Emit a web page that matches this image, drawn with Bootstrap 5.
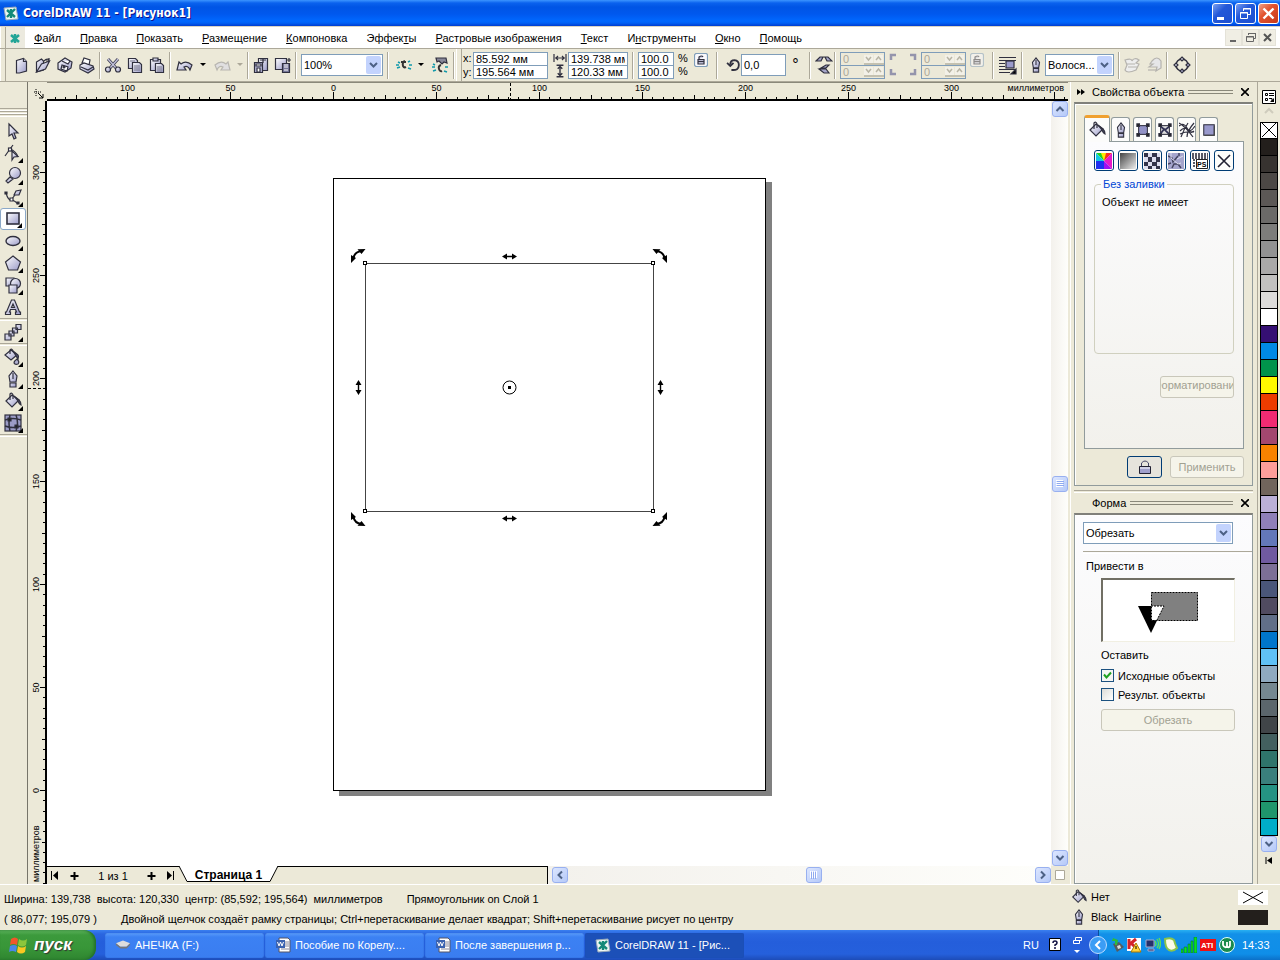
<!DOCTYPE html>
<html lang="ru">
<head>
<meta charset="utf-8">
<meta name="viewport" content="width=device-width, initial-scale=1">
<title>CorelDRAW 11 - [Рисунок1]</title>
<link rel="stylesheet" href="https://cdn.jsdelivr.net/npm/bootstrap@5.3.0/dist/css/bootstrap.min.css">
<style>
:root{--face:#ece9d8;--edge:#aca899;--field:#7f9db9;--frame:#919b9c}
body{font:11px/16px "Liberation Sans",Arial,sans-serif;color:#000;background:var(--face)}
button{font:inherit;color:inherit;background:none;border:0;padding:0}
svg{display:block;flex:none}
symbol:not(.flat){fill:url(#lav);stroke:#30303f;stroke-width:1.2}
.titlebar{height:26px;padding:0 1px 0 3px;background:linear-gradient(#3c95ff 0,#0a62ee 3px,#0055e5 7px,#0058ee 14px,#0068ff 21px,#0061f5 23px,#003dd0 26px);color:#fff;font:bold 12px/26px "DejaVu Sans Condensed","DejaVu Sans",sans-serif;text-shadow:1px 1px 0 #0f1089}
.winbtns{gap:2px}
.winbtn{width:21px;height:21px;border:1px solid #fff;border-radius:3px;background:linear-gradient(135deg,#7a9ff0,#2358d8 40%,#1d4fd0)}
.winbtn.shut{background:linear-gradient(135deg,#f0a088,#e2532f 40%,#c6391a)}
.menubar{height:23px;background:#fff;border-top:1px solid #d8d4c4;border-bottom:1px solid var(--edge)}
.grip{width:6px;align-self:stretch;border-left:1px solid #fff;border-right:1px solid var(--edge);background:var(--face);flex:none}
.menubar a{color:#000;text-decoration:none;line-height:24px;margin-left:19px;white-space:nowrap}
.menubar a:first-child{margin-left:9px}
.menubar .docico{background:#eceadf}
.mdibtn{width:17px;height:17px;background:#f0eee4;border:1px solid #e4e2d8}
.toolrow{height:33px;border-bottom:1px solid var(--edge)}
.toolrow>*{flex:none}
.tbtn{width:22px;height:24px;display:flex;align-items:center;justify-content:center}
.tbtn.wide{width:25px}
.tbtn.drop{width:12px}
.rule{width:2px;height:27px;border-left:1px solid var(--edge);border-right:1px solid #fff;margin:0 1px}
.fld{border:1px solid var(--field);border-radius:0;background:#fff;padding:0 2px;height:14px;line-height:12px;font-family:inherit;font-size:11px;color:#000;min-width:0;display:block}
.fld+.fld{margin-top:-1px}
.fld:disabled{background:var(--face);color:var(--edge)}
.pick{appearance:none;height:22px;border:1px solid var(--field);border-radius:0;padding:0 16px 0 2px;color:#000;background:#fff url("data:image/svg+xml,%3Csvg xmlns='http://www.w3.org/2000/svg' width='15' height='18'%3E%3Crect width='15' height='18' rx='2' fill='%23c3d3fd'/%3E%3Cpath d='M4 7l3.500 3.500L11 7' fill='none' stroke='%234d6185' stroke-width='2'/%3E%3C/svg%3E") no-repeat right 1px center;font-family:inherit;font-size:11px}
.zoomsel{width:82px}
.hairsel{width:69px}
.pair{width:11px;padding-left:1px}
.pair label{display:block;line-height:14px}
.w75{width:75px}
.w60{width:60px}
.w36{width:36px}
.w45{width:45px}
.pct{line-height:13px;width:20px;padding-left:4px}
.lk{align-self:flex-start;margin-top:4px}
.lk.off{opacity:.5}
.fld.spinang{width:45px;height:22px}
.deg{width:19px;text-align:center;font-size:16px}
.spins{position:relative}
.spins svg{position:absolute;right:1px;top:2px}
.toolbox{width:28px;border-right:1px solid #77756a;flex:none}
.toolgrips{margin:26px 0 3px}
.cell{width:26px;height:22px;display:flex;align-items:center;justify-content:center;position:relative;flex:none}
.cell.fly:after{content:"";position:absolute;right:3px;bottom:1px;border:solid;border-width:0 0 5px 5px;border-color:transparent transparent #000}
.cell.picked{background:#fff;border:1px solid #8ba8c8;border-radius:3px}
.line{height:3px;border-top:1px solid var(--edge);border-bottom:1px solid #fff;flex:none}
.rulers{font-size:9px;padding-right:2px}
.hruler{height:19px;border-bottom:2px solid #000;border-top:1px solid #8a887a;min-width:0}
.corner{width:19px;flex:none}
.vruler{width:19px;border-right:2px solid #000;flex:none;overflow:hidden}
.sheet{background:#fff;overflow:hidden;position:relative}
.drawing{position:absolute;left:286px;top:77px}
.track{background:linear-gradient(90deg,#f3f1ec,#fefefb)}
.vtrack{width:17px;flex:none}
.sbtn{width:16px;height:16px;border:1px solid #98b0f0;border-radius:3px;background:linear-gradient(135deg,#dce6ff,#b5c9f8);display:flex;align-items:center;justify-content:center;flex:none}
.hend{height:18px}
.pages{border-top:1px solid #000;flex:0 0 49%}
.plus{padding:0 6px}
.count{width:56px;text-align:center;font-size:11px;line-height:18px}
.hbar{border-left:1px solid #000}
.pastleft{flex-grow:10}
.pastright{flex-grow:9}
.pagetab{position:relative;width:99px;height:17px;font-weight:bold;font-size:12px;line-height:13px}
.pagetab svg{position:absolute;left:0;top:-1px}
.pagetab span{position:relative}
.dock{width:188px;flex:none;border-left:1px solid #fff;border-right:1px solid var(--edge);padding:0 4px 0 3px}
.dockhead{height:20px}
.bars{height:4px;border-top:1px solid #8a887a;border-bottom:1px solid #8a887a}
.panel{border:1px solid var(--frame);border-top:2px solid #80807a;box-shadow:inset 1px 1px #fff}
.props{height:384px;padding:10px 8px 8px 9px}
.tabs{gap:3px;height:27px}
.tabx{height:24px;width:19px;border:1px solid var(--frame);border-bottom:0;border-radius:3px 3px 0 0;background:#fcfcfb;display:flex;align-items:center;justify-content:center}
.tabx.on{width:26px;height:27px;border-top:3px solid #f0a030;margin:0 -2px -1px 0;position:relative}
.pane{border:1px solid var(--frame);background:linear-gradient(#fcfcfe,#f2f1ec);height:308px;padding:8px 9px}
.fillbtn{width:20px;height:21px;border:1px solid #003c74;border-radius:3px;background:#fdfdfb;display:flex;align-items:center;justify-content:center}
.group{border:1px solid #d0d0bf;border-radius:4px;height:177px;padding:0 7px;margin:6px 0 0}
.group legend{float:none;width:auto;font-size:11px;line-height:14px;padding:0 2px;margin:0 0 3px -1px;color:#0046d5}
.dead{border:1px solid #c9c7ba;border-radius:3px;background:#f5f4ea;color:#a1a192;height:22px;overflow:hidden;white-space:nowrap}
.fmt{width:74px;margin-top:22px}
.app{width:74px}
.acts{margin-top:7px}
.lockbtn{width:35px;height:22px;border:1px solid #003c74;border-radius:3px;background:#e6e4dc}
.shape{background:linear-gradient(#fcfcfe,#f2f1ec);padding-left:8px}
.opsel{width:150px;margin:7px 0;display:block}
.caption{padding:4px 0 4px 3px}
.inner{padding-left:18px}
.preview{height:64px;width:134px;background:#fff;border:solid;border-width:2px 1px 1px 2px;border-color:#716f64 #f1efe2 #f1efe2 #716f64}
.keep{margin:5px 0 3px}
.inner label{height:19px}
.cut1{width:134px;margin-top:5px}
.chk{appearance:none;width:13px;height:13px;border:1px solid #1c5180;background:linear-gradient(135deg,#dcdcd7,#fff);margin:0;flex:none}
.chk:checked{background:url("data:image/svg+xml,%3Csvg xmlns='http://www.w3.org/2000/svg' width='11' height='11'%3E%3Cpath d='M2 4.500l2.500 3L9 2.500' fill='none' stroke='%2321a121' stroke-width='2'/%3E%3C/svg%3E") #f6f6f3}
.swatches{width:22px;flex:none;overflow:hidden}
.palhead{height:40px}
.swatch{width:18px;height:17px;border:1px solid #000;border-top:0;display:block;flex:none}
.statusbar{height:46px;border-top:1px solid #fff}
.statusbar p{margin:0;line-height:20px;white-space:pre}
.infos{width:211px;padding:2px 12px 2px 2px}
.infos>div{height:20px}
.taskbar{height:30px;background:linear-gradient(#3a80f0 0,#2a66e0 4px,#245edb 12px,#2560dc 24px,#1d4cb8 30px);color:#fff}
.start{width:96px;background:linear-gradient(#5fb55f 0,#3c9a3c 5px,#389638 18px,#2f8530 30px);border-radius:0 12px 12px 0;font:italic bold 17px/28px "Liberation Sans",Arial,sans-serif;text-shadow:1px 1px 1px #333;box-shadow:inset -2px 0 3px #23702a}
.tasks{margin-left:9px;gap:1px}
.task{width:159px;height:25px;border-radius:2px;background:linear-gradient(#5a9bfa,#3c81f3 4px,#3a7df0);box-shadow:inset 0 0 1px #1c4cb0;padding:0 8px 0 10px;text-align:left}
.task.now{background:#1c50b8}
.lang{gap:10px}
.tray{background:linear-gradient(#29b0f2 0,#1290e8 4px,#0f8ee8 24px,#0c70c8 30px);border-left:1px solid #0a4f9e;gap:3px;width:182px}
.knob{margin-left:-10px}
</style>
</head>
<body class="d-flex flex-column min-vh-100 overflow-hidden">
<svg width="0" height="0" class="position-absolute" aria-hidden="true">
<defs>
<linearGradient id="lav" x2="1" y2="1"><stop offset="0" stop-color="#fff"/><stop offset="1" stop-color="#9a9ac8"/></linearGradient>
<linearGradient id="bw" x2="1" y2="1"><stop offset="0" stop-color="#444"/><stop offset="1" stop-color="#eee"/></linearGradient>
</defs>
<symbol id="logo" class="flat" viewBox="0 0 16 16"><path d="M1 3l12-1 2 12-12 1z" fill="#eef8f4" stroke="#9ab"/><path d="M4 5l8 7M12 4l-8 8M8 4v9" stroke="#138a78" stroke-width="2.400"/></symbol>
<symbol id="new" viewBox="0 0 18 18"><path d="M4.500 4.500l7-2 3 3v9.500l-7 2h-3z" /><path d="M11.500 2.500v3h3"/></symbol>
<symbol id="open" viewBox="0 0 18 18"><path d="M2.500 6l5-3 2 2v9l-7 2z"/><path d="M2.500 16l5-8 8-3-4 8z"/><path d="M10 5q3-3 5-1m0-2v3h-3" fill="none"/></symbol>
<symbol id="save" viewBox="0 0 18 18"><path d="M2 7l7-5 7 4-1 6-6 4-7-3z"/><path d="M6 5l6 3 2-3M5 13l1-4 6 2-1 4z" fill="#fff"/><circle cx="8" cy="11" r="1" fill="#334"/></symbol>
<symbol id="print" viewBox="0 0 18 18"><path d="M4 7l2-5 6 2-1 5z" fill="#fff"/><path d="M2 9l4-2 9 3 1 3-6 4-8-4z"/><path d="M3 11l7 3 5-3" fill="none"/></symbol>
<symbol id="cut" viewBox="0 0 18 18"><path d="M4 3l8 9M14 3l-8 9" stroke="#444458" stroke-width="3"/><path d="M4 3l8 9M14 3l-8 9" stroke="#c4c4dd"/><circle cx="4" cy="13.500" r="2.500"/><circle cx="14" cy="13.500" r="2.500"/></symbol>
<symbol id="copy" viewBox="0 0 18 18"><path d="M2.500 2.500h7l2 2v8h-9z"/><path d="M6.500 6.500h7l2 2v8h-9z"/><path d="M8 10h6M8 12h6M8 14h6M4 5h5" stroke="#778"/></symbol>
<symbol id="paste" viewBox="0 0 18 18"><path d="M2.500 3.500h10v11h-10z"/><path d="M5 2h5v3H5z"/><path d="M7.500 7.500h6l2 2v7h-8z"/><path d="M9 11h5M9 13h5M9 15h5" stroke="#778"/></symbol>
<symbol id="undo" viewBox="0 0 18 18"><path d="M1 14l2-8 2 2q5-4 11 1l-2 5q-2-5-6-3l2 3z"/></symbol>
<symbol id="redo" viewBox="0 0 18 18"><path d="M17 14l-2-8-2 2q-5-4-11 1l2 5q2-5 6-3l-2 3z" stroke="#b8b6b0" fill="#e0dfe0"/></symbol>
<symbol id="imp" viewBox="0 0 18 18"><path d="M6.500 2.500h9v12h-9z"/><path d="M2.500 6.500h8v10h-8z" fill="#b5b5d6"/><path d="M4 8h5v2H4zM5 12h3v4H5z" fill="#fff"/><path d="M8 4h6m-3-2v5" /></symbol>
<symbol id="exp" viewBox="0 0 18 18"><path d="M1.500 2.500h11v11h-11z"/><path d="M8.500 7.500h7v9h-7z" fill="#777799"/><path d="M10 9h4M10 11h4M10 14h4" stroke="#fff"/><path d="M12 4h5m-2-2v4"/></symbol>
<symbol id="corel" viewBox="0 0 18 18"><path d="M1 9h3M3 6l2 1M2 12l3-1M14 9h3M13 6l2-1M13 12l3 1" stroke="#19a" stroke-width="1.600"/><path d="M10 5q-3 1-2 5 1 2 3 1M6 6l5 0" fill="none" stroke="#333" stroke-width="2"/></symbol>
<symbol id="web" viewBox="0 0 18 18"><path d="M5 2h10l1 5-3-1-2 2-3-3-2 1z" fill="#889"/><path d="M1 11h3M2 8l2 1M2 15l3-1M14 11h3M13 15l3 1" stroke="#19a" stroke-width="1.600"/><path d="M10 9q-3 1-2 4 1 3 3 2" fill="none" stroke="#333" stroke-width="2"/></symbol>
<symbol id="wid" viewBox="0 0 14 12"><path d="M1 2v8M13 2v8M2 6h10M5 4L3 6l2 2M9 4l2 2-2 2" fill="none"/></symbol>
<symbol id="hei" viewBox="0 0 14 12"><path d="M4 1h6M4 11h6M7 2v8M5 4l2-2 2 2M5 8l2 2 2-2" fill="none"/></symbol>
<symbol id="lock" viewBox="0 0 14 14"><rect x=".5" y=".5" width="13" height="13" rx="2" fill="#f8f8fc" stroke="#7f9db9"/><path d="M4 6.500h6v4.500H4zM5 6V4q3-2 4 0" fill="#c8c8e0"/><path d="M4 8.500h6"/></symbol>
<symbol id="turn" viewBox="0 0 14 14"><path d="M5 11.500q7 1 7-4.500 0-4-4-4.500-4 0-4 4M1 5l3 3 3-3" fill="none" stroke-width="1.700"/></symbol>
<symbol id="mirror" viewBox="0 0 18 24"><path d="M1 8l4-4h3l-2 4zM10 4l3 0 4 4h-5zM7 4h4" fill="#a5a5c8"/><path d="M6 15l5-3h3l-3 3zM4 16h7l3 4H9z" fill="#a5a5c8"/></symbol>
<symbol id="corners" viewBox="0 0 28 24"><path d="M2 7V2h5M21 2h5v5M2 16v5h5M26 16v5h-5" fill="none" stroke="#9494ac" stroke-width="2.500"/></symbol>
<symbol id="wrap" viewBox="0 0 20 20"><path d="M1 2.500h17M1 5.500h17M1 8.500h6M1 11.500h6M1 14.500h17M1 17.500h11"/><rect x="8" y="6" width="8" height="7" fill="#9a9acb"/><path d="M18 14v5h-5z" fill="#000"/></symbol>
<symbol id="pen" viewBox="0 0 18 18"><path d="M9 1l4 5-1 6H6L5 6z"/><path d="M6 13h6v4H6zM9 3v6"/></symbol>
<symbol id="front" viewBox="0 0 18 18"><path d="M2 4q7-2 7 1 2-4 7-1l-3 3 3 1-3 6q-9 4-11 0l2-5z" fill="#eee" stroke="#b5b3ae"/><path d="M4 8h8M5 11h9" stroke="#b5b3ae"/></symbol>
<symbol id="back" viewBox="0 0 18 18"><path d="M7 5q5-6 9 0v7l-5 3 1-4H4l4-3H5z" fill="#e6e6e8" stroke="#b5b3ae"/><path d="M3 14h9" stroke="#b5b3ae"/></symbol>
<symbol id="curve" viewBox="0 0 18 18"><circle cx="9" cy="9" r="6" fill="none" stroke-width="1.500"/><path d="M9 1l2 2-2 2-2-2zM9 13l2 2-2 2-2-2zM1 9l2-2 2 2-2 2zM13 9l2-2 2 2-2 2z"/></symbol>
<symbol id="arrow" viewBox="0 0 18 18"><path d="M5 2l9 9-4 0 2 5-2 1-2-5-3 2z"/></symbol>
<symbol id="node" viewBox="0 0 18 18"><path d="M6 5L1 12M6 5l3-4M6 5q6 2 8 8" fill="none"/><rect x="4.500" y="4" width="3" height="3" fill="#fff"/><path d="M8 7l6 5.500-4 .5-2 3z"/></symbol>
<symbol id="zoomer" viewBox="0 0 18 18"><path d="M6 11l-4 4 2 2 5-4z"/><circle cx="11" cy="7" r="5.500"/></symbol>
<symbol id="free" viewBox="0 0 18 18"><path d="M2 5q2 7 5 7t7 4M7 12l4-5" fill="none"/><path d="M10 7l2-4 5-1-2 5z"/><path d="M1 4h2v2H1zM13 14h2v2h-2z" fill="#222"/><path d="M6 10h3v3H6z" fill="#fff"/></symbol>
<symbol id="box" viewBox="0 0 18 18"><rect x="3" y="3" width="12" height="11" stroke-width="1.600"/></symbol>
<symbol id="oval" viewBox="0 0 18 18"><ellipse cx="9" cy="9" rx="7" ry="4.500" stroke-width="1.400"/></symbol>
<symbol id="penta" viewBox="0 0 18 18"><path d="M9 2l7.500 6-3 8h-9l-3-8z"/></symbol>
<symbol id="basic" viewBox="0 0 18 18"><path d="M2 2h8v8H2z"/><circle cx="11.500" cy="7.500" r="5"/><path d="M5 9h8v8H5z"/></symbol>
<symbol id="letter" viewBox="0 0 18 18"><path d="M7.500 2h3l5 12h1v2.500h-5V14h1l-1-2.500H6.500l-1 2.500h1v2.500h-5V14h1zM9 6l-1.500 3.500h3z"/></symbol>
<symbol id="blend" viewBox="0 0 18 18"><path d="M12 1.500h5v5h-5zM8.500 5h5v5h-5zM5 8h5v5H5zM1 11h6v6H1z"/></symbol>
<symbol id="bucket" viewBox="0 0 18 18"><path d="M2 9l6-6 7 5-7 7z"/><path d="M6 8V2q2-2 3 1v4" fill="none"/><path d="M10 4l5 4q2 2 2 5-2-1-3-4z" fill="#555570"/></symbol>
<symbol id="drip" viewBox="0 0 18 18"><path d="M1 7l6-5 6 5-6 5z"/><path d="M6 6V2q2-2 3 1" fill="none"/><path d="M9 3l5 4q1 1 0 4z" fill="#555570"/><path d="M13 11q3 3 1 5-3 1-4-1 0-2 3-4z" fill="#b0b0d0"/></symbol>
<symbol id="mesh" viewBox="0 0 18 18"><rect x="1" y="1" width="16" height="16" fill="#9c9cc6"/><path d="M1 6q8-3 16 0M1 12q8 3 16 0M6 1q-2 8 0 16M12 1q3 8 0 16" fill="none" stroke-width="1.500"/><path d="M4 4h3v3H4zM11 11h3v3h-3z" fill="#222"/></symbol>
<symbol id="outline" viewBox="0 0 16 16"><rect x="3" y="3" width="10" height="10" fill="#9292c6"/><path d="M1 1h3v3H1zM12 1h3v3h-3zM1 12h3v3H1zM12 12h3v3h-3z" fill="#222"/></symbol>
<symbol id="image" viewBox="0 0 16 16"><rect x="3" y="3" width="10" height="10" fill="#ddd"/><path d="M3 4l5 4 5-4M3 12l4-5 6 6" stroke="#335" stroke-width="2" fill="none"/><path d="M1 1h3v3H1zM12 1h3v3h-3zM1 12h3v3H1zM12 12h3v3h-3z" fill="#222"/></symbol>
<symbol id="net" viewBox="0 0 16 16"><path d="M0 4q5-4 8 2t8-2M1 9q5-5 8-1t6 1M2 15q3-8 7-14M8 15q0-6 7-14M0 1q6 3 14 14M1 12q6-3 14-2" fill="none"/></symbol>
<symbol id="plain" viewBox="0 0 16 16"><rect x="2" y="2" width="12" height="12" fill="#9999cc"/><path d="M14 3v11H3" stroke="#444" fill="none"/></symbol>
<symbol id="word" class="flat" viewBox="0 0 16 16"><path d="M4 1h9l2 2v12H4z" fill="#fff" stroke="#556"/><path d="M10 5h4M10 7h4M10 9h4M6 12h8" stroke="#889"/><rect x="1" y="3" width="9" height="8" fill="#3a62b0"/><path d="M2.500 5l1.500 4 1.500-4L7 9l1.500-4" fill="none" stroke="#fff"/></symbol>
<symbol id="caret" class="flat" viewBox="0 0 8 8"><path d="M1 2h6L4 5z"/></symbol>
<symbol id="chev" class="flat" viewBox="0 0 10 10"><path d="M1.500 3L5 6.500 8.500 3" fill="none" stroke="#4d6185" stroke-width="2"/></symbol>
<symbol id="spin" class="flat" viewBox="0 0 21 24"><path d="M1 1h9v8H1zM11 1h9v8h-9zM1 13h9v8H1zM11 13h9v8h-9z" fill="#f3f1e8"/><path d="M1 10h20M1 22h20" stroke="#c4c1b0" stroke-width="2"/><path d="M3 3l2.500 3L8 3M13 6l2.500-3L18 6M3 15l2.500 3L8 15M13 18l2.500-3 2.500 3" fill="none" stroke="#b8b5a5" stroke-width="1.500"/></symbol>
</svg>

<header class="titlebar d-flex align-items-center">
<svg width="16" height="16" class="me-1"><use href="#logo"/></svg><span class="flex-grow-1 text-nowrap">CorelDRAW 11 - [Рисунок1]</span>
<div class="winbtns d-flex">
<button class="winbtn" aria-label="Свернуть"><svg width="19" height="19"><path d="M4 13h7v3H4z" fill="#fff"/></svg></button>
<button class="winbtn" aria-label="Восстановить"><svg width="19" height="19" fill="none" stroke="#fff"><path d="M7.500 7V4.500h7v6H12"/><path d="M4.500 8.500h7v6h-7zM4 9h8M7 5h8"/></svg></button>
<button class="winbtn shut" aria-label="Закрыть"><svg width="19" height="19"><path d="M4.500 4.500l10 10M14.500 4.500l-10 10" stroke="#fff" stroke-width="2.400"/></svg></button>
</div>
</header>

<nav class="menubar d-flex align-items-center pe-1">
<span class="grip"></span>
<svg width="19" height="21" class="docico"><path d="M5 8l8 7M13 8l-8 7M9 7v9" stroke="#22a596" stroke-width="2.500"/></svg>
<div class="d-flex flex-grow-1">
<a href="#"><u>Ф</u>айл</a><a href="#"><u>П</u>равка</a><a href="#"><u>П</u>оказать</a><a href="#"><u>Р</u>азмещение</a><a href="#"><u>К</u>омпоновка</a><a href="#">Эффек<u>т</u>ы</a><a href="#"><u>Р</u>астровые изображения</a><a href="#"><u>Т</u>екст</a><a href="#">И<u>н</u>струменты</a><a href="#"><u>О</u>кно</a><a href="#"><u>П</u>омощь</a>
</div>
<button class="mdibtn" aria-label="Свернуть документ"><svg width="15" height="15"><path d="M4 10h6v2H4z" fill="#666"/></svg></button>
<button class="mdibtn" aria-label="Восстановить документ"><svg width="15" height="15" fill="none" stroke="#666"><path d="M5.500 5V3.500h7v5H11M5 3.500h8M3.500 6.500h7v5h-7zM3 7h8"/></svg></button>
<button class="mdibtn" aria-label="Закрыть документ"><svg width="15" height="15"><path d="M4 4l7 7M11 4l-7 7" stroke="#555" stroke-width="2"/></svg></button>
</nav>

<div class="toolrow d-flex align-items-center">
<span class="grip me-1"></span>
<button class="tbtn" aria-label="Создать"><svg width="18" height="18"><use href="#new"/></svg></button>
<button class="tbtn" aria-label="Открыть"><svg width="18" height="18"><use href="#open"/></svg></button>
<button class="tbtn" aria-label="Сохранить"><svg width="18" height="18"><use href="#save"/></svg></button>
<button class="tbtn" aria-label="Печать"><svg width="18" height="18"><use href="#print"/></svg></button>
<span class="rule"></span>
<button class="tbtn" aria-label="Вырезать"><svg width="18" height="18"><use href="#cut"/></svg></button>
<button class="tbtn" aria-label="Копировать"><svg width="18" height="18"><use href="#copy"/></svg></button>
<button class="tbtn" aria-label="Вставить"><svg width="18" height="18"><use href="#paste"/></svg></button>
<span class="rule"></span>
<button class="tbtn wide" aria-label="Отменить"><svg width="18" height="18"><use href="#undo"/></svg></button>
<button class="tbtn drop" aria-label="Список отмены"><svg width="8" height="8"><use href="#caret"/></svg></button>
<button class="tbtn wide" aria-label="Повторить"><svg width="18" height="18"><use href="#redo"/></svg></button>
<button class="tbtn drop" aria-label="Список повтора"><svg width="8" height="8" fill="#aca899"><use href="#caret"/></svg></button>
<span class="rule"></span>
<button class="tbtn" aria-label="Импорт"><svg width="18" height="18"><use href="#imp"/></svg></button>
<button class="tbtn" aria-label="Экспорт"><svg width="18" height="18"><use href="#exp"/></svg></button>
<span class="rule me-1"></span>
<select class="pick zoomsel" aria-label="Масштаб"><option>100%</option></select>
<span class="rule mx-1"></span>
<button class="tbtn" aria-label="Запуск"><svg width="18" height="18"><use href="#corel"/></svg></button>
<button class="tbtn drop" aria-label="Список запуска"><svg width="8" height="8"><use href="#caret"/></svg></button>
<button class="tbtn wide" aria-label="Веб"><svg width="18" height="18"><use href="#web"/></svg></button>
<span class="rule"></span><span class="grip"></span>
<div class="pair"><label for="px">x:</label><label for="py">y:</label></div>
<div class="w75"><input id="px" class="fld w-100" value="85.592 мм"><input id="py" class="fld w-100" value="195.564 мм"></div>
<div class="ms-1"><svg width="16" height="12"><use href="#wid"/></svg><svg width="16" height="14"><use href="#hei"/></svg></div>
<div class="w60"><input class="fld w-100" aria-label="Ширина" value="139.738 мм"><input class="fld w-100" aria-label="Высота" value="120.33 мм"></div>
<span class="rule mx-1"></span>
<div class="w36"><input class="fld w-100" aria-label="Масштаб по ширине" value="100.0"><input class="fld w-100" aria-label="Масштаб по высоте" value="100.0"></div>
<div class="pct">%<br>%</div>
<button class="lk" aria-label="Сохранять пропорции"><svg width="14" height="14"><use href="#lock"/></svg></button>
<span class="rule mx-2"></span>
<svg width="15" height="16"><use href="#turn"/></svg>
<input class="fld spinang" aria-label="Угол поворота" value="0,0"><span class="deg">°</span>
<span class="rule mx-1"></span>
<svg width="18" height="26"><use href="#mirror"/></svg>
<span class="rule me-1"></span>
<div class="spins w45"><input class="fld w-100" disabled aria-label="Угол 1" value="0"><input class="fld w-100" disabled aria-label="Угол 2" value="0"><svg width="21" height="24"><use href="#spin"/></svg></div>
<svg width="28" height="24" class="mx-1"><use href="#corners"/></svg>
<div class="spins w45"><input class="fld w-100" disabled aria-label="Угол 3" value="0"><input class="fld w-100" disabled aria-label="Угол 4" value="0"><svg width="21" height="24"><use href="#spin"/></svg></div>
<button class="lk off ms-1" aria-label="Связать углы"><svg width="14" height="14"><use href="#lock"/></svg></button>
<span class="rule ms-2"></span>
<button class="tbtn wide" aria-label="Обтекание"><svg width="20" height="20"><use href="#wrap"/></svg></button>
<span class="rule me-1"></span>
<svg width="18" height="16"><use href="#pen"/></svg>
<select class="pick hairsel" aria-label="Толщина абриса"><option>Волося...</option></select>
<span class="rule ms-1"></span>
<button class="tbtn" aria-label="На передний план"><svg width="18" height="18"><use href="#front"/></svg></button>
<button class="tbtn" aria-label="На задний план"><svg width="18" height="18"><use href="#back"/></svg></button>
<span class="rule"></span>
<button class="tbtn wide" aria-label="Преобразовать в кривые"><svg width="18" height="18"><use href="#curve"/></svg></button>
<span class="rule"></span>
</div>

<main class="d-flex flex-grow-1">
<aside class="toolbox d-flex flex-column">
<div class="toolgrips"><div class="line"></div><div class="line"></div><div class="line"></div></div>
<button class="cell" aria-label="Указатель"><svg width="18" height="18"><use href="#arrow"/></svg></button>
<button class="cell fly" aria-label="Форма"><svg width="18" height="18"><use href="#node"/></svg></button>
<button class="cell fly" aria-label="Лупа"><svg width="18" height="18"><use href="#zoomer"/></svg></button>
<button class="cell fly" aria-label="Кривая"><svg width="18" height="18"><use href="#free"/></svg></button>
<button class="cell fly picked" aria-label="Прямоугольник"><svg width="18" height="18"><use href="#box"/></svg></button>
<button class="cell fly" aria-label="Эллипс"><svg width="18" height="18"><use href="#oval"/></svg></button>
<button class="cell fly" aria-label="Многоугольник"><svg width="18" height="18"><use href="#penta"/></svg></button>
<button class="cell fly" aria-label="Фигуры"><svg width="18" height="18"><use href="#basic"/></svg></button>
<button class="cell" aria-label="Текст"><svg width="18" height="18"><use href="#letter"/></svg></button>
<div class="line"></div>
<button class="cell fly" aria-label="Перетекание"><svg width="18" height="18"><use href="#blend"/></svg></button>
<div class="line"></div>
<button class="cell fly" aria-label="Пипетка"><svg width="18" height="18"><use href="#drip"/></svg></button>
<button class="cell fly" aria-label="Абрис"><svg width="18" height="18"><use href="#pen"/></svg></button>
<button class="cell fly" aria-label="Заливка"><svg width="18" height="18"><use href="#bucket"/></svg></button>
<button class="cell fly" aria-label="Сетка"><svg width="18" height="18"><use href="#mesh"/></svg></button>
<div class="line"></div>
</aside>

<section class="d-flex flex-column flex-grow-1 rulers">
<div class="d-flex">
<div class="corner"><svg width="19" height="19"><path d="M6 10h1M8 10h1M10 10h1M12 10h1M8 7v1M8 9v1M8 11v1M8 13v1M10 11l5 5m0-4v4h-4" stroke="#000" fill="none"/></svg></div>
<div class="hruler flex-grow-1"><svg id="hr" width="100%" height="16"></svg></div>
</div>
<div class="d-flex flex-grow-1">
<div class="vruler"><svg id="vr" width="17" height="100%"></svg></div>
<div class="d-flex flex-column flex-grow-1">
<div class="d-flex flex-grow-1">
<div class="sheet flex-grow-1">
<svg class="drawing" width="445" height="625" shape-rendering="crispEdges">
<path d="M6 613h427V4h6v614H6z" fill="#808080"/>
<rect x=".5" y=".5" width="432" height="612" fill="#fff" stroke="#000"/>
<rect x="32.500" y="85.500" width="288" height="248" fill="none" stroke="#444"/>
<path d="M30.500 83.500h3v3h-3zM318.500 83.500h3v3h-3zM30.500 331.500h3v3h-3zM318.500 331.500h3v3h-3z" fill="#fff" stroke="#000"/>
<g id="hd" shape-rendering="auto"><path d="M169 78.500l5-3v2.300h5v-2.300l5 3-5 3v-2.300h-5v2.300z"/></g><use href="#hd" y="262"/>
<path id="vd" shape-rendering="auto" d="M25.500 202l3 5h-2.300v5h2.300l-3 5-3-5h2.300v-5h-2.300z"/><use href="#vd" x="302"/>
<circle cx="176.500" cy="209.500" r="6.500" fill="none" stroke="#000" shape-rendering="auto"/><path d="M175 208h3v3h-3z"/>
<g id="rot" shape-rendering="auto"><path d="M20.500 80q1-6 8-7" fill="none" stroke="#000" stroke-width="2"/><path d="M32.500 71l-8 .3 4 4.700zM18 85v-8l5 3z"/></g>
<use href="#rot" transform="translate(352 0) scale(-1 1)"/><use href="#rot" transform="translate(0 419) scale(1 -1)"/><use href="#rot" transform="translate(352 419) scale(-1 -1)"/>
</svg>
</div>
<div class="track vtrack d-flex flex-column align-items-center">
<button class="sbtn" aria-label="Вверх"><svg width="10" height="10"><path d="M1.500 7L5 3.500 8.500 7" fill="none" stroke="#4d6185" stroke-width="2"/></svg></button>
<span class="flex-grow-1"></span>
<span class="sbtn"><svg width="8" height="8"><path d="M0 .5h7M0 2.500h7M0 4.500h7M0 6.500h7" stroke="#fff"/><path d="M1 1.500h7M1 3.500h7M1 5.500h7" stroke="#8faaf0"/></svg></span>
<span class="flex-grow-1"></span>
<button class="sbtn" aria-label="Вниз"><svg width="10" height="10"><use href="#chev"/></svg></button>
</div>
</div>
<div class="hend d-flex align-items-center">
<div class="pages d-flex h-100">
<button class="px-1" aria-label="Первая страница"><svg width="9" height="9"><path d="M.500 0v9" stroke="#000"/><path d="M7 0v9L2 4.500z"/></svg></button>
<button class="plus" aria-label="Добавить в начало"><svg width="9" height="9"><path d="M4.500 1v8M.500 5h8" stroke="#000" stroke-width="2"/></svg></button>
<span class="count">1 из 1</span>
<button class="plus" aria-label="Добавить в конец"><svg width="9" height="9"><path d="M4.500 1v8M.500 5h8" stroke="#000" stroke-width="2"/></svg></button>
<button class="px-1" aria-label="Последняя страница"><svg width="9" height="9"><path d="M7.500 0v9" stroke="#000"/><path d="M1 0v9l5-4.500z"/></svg></button>
<button class="pagetab"><svg width="99" height="17"><path d="M0 0l8 15.500h83L99 0" fill="#fff" stroke="#000"/></svg><span>Страница 1</span></button>
</div>
<div class="track d-flex flex-grow-1 align-items-center h-100 ps-1 hbar">
<button class="sbtn" aria-label="Влево"><svg width="10" height="10"><path d="M7 1.500L3.500 5 7 8.500" fill="none" stroke="#4d6185" stroke-width="2"/></svg></button>
<span class="pastleft"></span>
<span class="sbtn"><svg width="8" height="8"><path d="M.5 0v7M2.500 0v7M4.500 0v7M6.500 0v7" stroke="#fff"/><path d="M1.500 1v7M3.500 1v7M5.500 1v7" stroke="#8faaf0"/></svg></span>
<span class="pastright"></span>
<button class="sbtn" aria-label="Вправо"><svg width="10" height="10"><path d="M3 1.500L6.500 5 3 8.500" fill="none" stroke="#4d6185" stroke-width="2"/></svg></button>
</div>
<div class="vtrack d-flex justify-content-center"><svg width="10" height="10"><path d="M.5 .5h9v9h-9z" fill="#fff" stroke="#aca899"/></svg></div>
</div>
</div>
</div>
</section>

<aside class="dock d-flex flex-column">
<div class="dockhead d-flex align-items-center gap-1"><svg width="14" height="10"><path d="M3 2l4 3-4 3zM7 2l4 3-4 3z"/></svg><span>Свойства объекта</span><span class="bars flex-grow-1"></span><button class="px-1" aria-label="Закрыть свойства"><svg width="8" height="8"><path d="M0 0l8 8M8 0L0 8" stroke="#000" stroke-width="1.600"/></svg></button></div>
<div class="panel props">
<div class="d-flex align-items-end tabs">
<button class="tabx on" aria-label="Заливка"><svg width="18" height="18"><use href="#bucket"/></svg></button>
<button class="tabx" aria-label="Абрис"><svg width="16" height="18"><use href="#pen"/></svg></button>
<button class="tabx" aria-label="Общие"><svg width="14" height="14"><use href="#outline"/></svg></button>
<button class="tabx" aria-label="Детали"><svg width="14" height="14"><use href="#image"/></svg></button>
<button class="tabx" aria-label="Интернет"><svg width="16" height="16"><use href="#net"/></svg></button>
<button class="tabx" aria-label="Прямоугольник"><svg width="14" height="14"><use href="#plain"/></svg></button>
</div>
<div class="pane">
<div class="d-flex gap-1">
<button class="fillbtn" aria-label="Однородная"><svg width="16" height="16"><path d="M0 0h8v8z" fill="#1fd31f"/><path d="M8 0h8L8 8z" fill="#f5301a"/><path d="M0 0v16l8-8z" fill="#12c8e8"/><path d="M0 8v8h8V8z" fill="#2030f0"/><path d="M8 8L16 0v16z" fill="#e619c8"/><path d="M8 8v8h8z" fill="#a010f0"/><path d="M5 0h5L8 8z" fill="#ffe900"/></svg></button>
<button class="fillbtn" aria-label="Фонтанная"><svg width="16" height="16"><path d="M0 0h16v16H0z" fill="url(#bw)"/></svg></button>
<button class="fillbtn" aria-label="Узор"><svg width="16" height="16"><path d="M0 0h16v16H0z" fill="#dde"/><path d="M0 0h4v4H0zM8 0h5v4H8zM4 4h4v5H4zM12 4h4v5h-4zM0 9h4v4H0zM8 9h5v4H8zM4 13h4v3H4zM12 13h4v3h-4z" fill="#33334a"/></svg></button>
<button class="fillbtn" aria-label="Текстура"><svg width="16" height="16"><path d="M0 0h16v16H0z" fill="#a5a5cc"/><path d="M0 3l4 2 1 4 5-6M4 15l2-4 4 0 3 4M11 0v3M0 11l3-1" stroke="#44445f" stroke-width="1.500" fill="none"/><path d="M3 0v5l7 6 3-1M9 6l6-3" stroke="#dde" fill="none"/></svg></button>
<button class="fillbtn" aria-label="PostScript"><svg width="16" height="16"><path d="M0 1h16M0 3h16M0 5h16M1 7h4M1 10h3M1 13h3" stroke="#223" stroke-width="1.500" stroke-dasharray="2 1"/><path d="M4.500 6.500h11v9h-11z" fill="#fff" stroke="#222"/><text x="5" y="14" font-size="7" font-weight="bold">PS</text></svg></button>
<button class="fillbtn" aria-label="Без заливки"><svg width="16" height="16"><path d="M2 2l12 12M14 2L2 14" stroke="#223" stroke-width="1.600"/></svg></button>
</div>
<fieldset class="group"><legend>Без заливки</legend>Объект не имеет</fieldset>
<button class="dead fmt d-flex justify-content-center ms-auto" disabled>Форматирование</button>
</div>
<div class="d-flex justify-content-end gap-2 acts"><button class="lockbtn d-flex align-items-center justify-content-center" aria-label="Автоприменение"><svg width="16" height="16"><path d="M4.500 7V4q3.500-4 7 0v3" fill="none" stroke="#446"/><path d="M2.500 7.500h11v7h-11z" fill="#a0a0cc" stroke="#223"/><path d="M3 9h10" stroke="#fff"/></svg></button><button class="dead app" disabled>Применить</button></div>
</div>
<div class="line mt-1"></div>
<div class="dockhead d-flex align-items-center gap-1"><svg width="14" height="10"></svg><span>Форма</span><span class="bars flex-grow-1"></span><button class="px-1" aria-label="Закрыть форму"><svg width="8" height="8"><path d="M0 0l8 8M8 0L0 8" stroke="#000" stroke-width="1.600"/></svg></button></div>
<div class="panel shape flex-grow-1">
<select class="pick opsel" aria-label="Операция"><option>Обрезать</option></select>
<div class="line"></div>
<div class="caption">Привести в</div>
<div class="inner">
<div class="preview"><svg width="130" height="60"><path d="M35 26h26L48 53z"/><path d="M48.500 12.500h46v28h-46z" fill="#808080"/><path d="M48 26h13l-7 14h-6z" fill="#fff"/><path d="M48.500 12.500h46v28h-46zM48 26h13l-7 14" fill="none" stroke="#000" stroke-dasharray="2 1"/></svg></div>
<div class="keep">Оставить</div>
<label class="d-flex align-items-center gap-1"><input type="checkbox" class="chk" checked>Исходные объекты</label>
<label class="d-flex align-items-center gap-1"><input type="checkbox" class="chk">Результ. объекты</label>
<button class="dead cut1" disabled>Обрезать</button>
</div>
</div>
</aside>

<aside class="swatches d-flex flex-column align-items-center">
<div class="palhead pt-2"><svg width="14" height="14"><path d="M.5 .5h13v13H.5z" fill="#fff" stroke="#000"/><path d="M3.500 3.500h2v2h-2zM3.500 8.500h2v2h-2zM7 3.500h5M7 5.500h5M7 8.500h3v3" fill="none" stroke="#000"/><path d="M12 8v4H8z"/></svg><svg width="14" height="14"><path d="M3 9l4-4 4 4" fill="none" stroke="#cfccbd" stroke-width="2"/></svg></div>
<button class="swatch bg-white" aria-label="Нет цвета"><svg width="16" height="16"><path d="M0 .5h16M1 1l14 14M15 1L1 15" fill="none" stroke="#000"/></svg></button>
<div id="pal"></div>
<button class="sbtn" aria-label="Палитра вниз"><svg width="10" height="10"><use href="#chev"/></svg></button>
<button class="p-1" aria-label="Развернуть палитру"><svg width="8" height="9"><path d="M1 1v7" stroke="#000"/><path d="M7 1v7L2 4.500z"/></svg></button>
</aside>
</main>

<footer class="statusbar d-flex">
<div class="flex-grow-1 ps-1 pt-1"><p>Ширина: 139,738  высота: 120,330  центр: (85,592; 195,564)  миллиметров<span class="ms-4">Прямоугольник on Слой 1</span></p><p>( 86,077; 195,079 )<span class="ms-4">Двойной щелчок создаёт рамку страницы; Ctrl+перетаскивание делает квадрат; Shift+перетаскивание рисует по центру</span></p></div>
<div class="d-flex flex-column infos">
<div class="d-flex align-items-center"><svg width="16" height="16"><use href="#bucket"/></svg><span class="flex-grow-1 ps-1">Нет</span><svg width="30" height="15"><path d="M0 0h30v15H0z" fill="#fff"/><path d="M5 2l20 11M25 2L5 13" stroke="#000"/></svg></div>
<div class="d-flex align-items-center"><svg width="16" height="16"><use href="#pen"/></svg><p class="flex-grow-1 ps-1">Black  Hairline</p><svg width="30" height="15"><path d="M0 0h30v15H0z" fill="#231f1c"/></svg></div>
</div>
</footer>

<footer class="taskbar d-flex align-items-center">
<button class="start h-100 d-flex align-items-center ps-2 gap-1"><svg width="22" height="20"><path d="M3 4q4-3 7 0l-1 6q-4-2-7 0z" fill="#f1562a"/><path d="M11 4q4 3 8 0l-1 6q-4 3-8 0z" fill="#8cc63c"/><path d="M2 11q4-2 7 0l-1 6q-4-2-7 0z" fill="#4a86e8"/><path d="M10 11q4 3 8 0l-1 6q-4 3-8 0z" fill="#fbc821"/></svg>пуск</button>
<div class="d-flex flex-grow-1 tasks">
<button class="task d-flex align-items-center gap-1"><svg width="16" height="16" viewBox="0 0 18 16"><path d="M1 6l8-3 8 3-4 4H6z" fill="#ddd"/><path d="M1 6l5 4h7l4-4v2l-4 4H6L1 8z" fill="#777"/></svg><span>АНЕЧКА (F:)</span></button>
<button class="task d-flex align-items-center gap-1"><svg width="16" height="16"><use href="#word"/></svg><span>Пособие по Корелу....</span></button>
<button class="task d-flex align-items-center gap-1"><svg width="16" height="16"><use href="#word"/></svg><span>После завершения р...</span></button>
<button class="task now d-flex align-items-center gap-1"><svg width="16" height="16"><use href="#logo"/></svg><span>CorelDRAW 11 - [Рис...</span></button>
</div>
<div class="lang d-flex align-items-center pe-3"><span>RU</span><svg width="13" height="14"><path d="M.5 .5h11v12H.5z" fill="#fff" stroke="#000"/><path d="M4 5q0-2 2-2t2 2q0 1-2 2v1M6 9v2" fill="none" stroke="#114" stroke-width="1.500"/></svg><svg width="10" height="18"><path d="M3.500 1.500h6v3h-6zM1.500 4.500h6v3h-6z" fill="#245edb" stroke="#fff"/><path d="M2 14h6l-3 3z" fill="#fff"/></svg></div>
<div class="tray h-100 d-flex align-items-center">
<svg width="18" height="18" class="knob"><circle cx="9" cy="9" r="8.500" fill="#3b9df5" stroke="#bcdcff"/><path d="M11 5L7 9l4 4" fill="none" stroke="#fff" stroke-width="2"/></svg>
<svg width="14" height="16"><path d="M3 7l6-2 5 5-7 5z" fill="#555b60"/><path d="M7 9l3-1 1 3-3 1z" fill="#ddd"/><path d="M5 8V4H2l1-3 5 2-1 5z" fill="#2dbb3d"/></svg>
<svg width="15" height="16"><path d="M0 1h14v13H0z" fill="#fff"/><path d="M2 2v10M2 8l7-6M5 7l6 6" stroke="#d4222a" stroke-width="3"/><path d="M9 6l5 9H4z" fill="#ffd23a" stroke="#a70"/><path d="M9 9v3" stroke="#000"/></svg>
<svg width="16" height="16"><path d="M1 3h8v7H1zM3 12h6v2H3z" fill="#26306b" stroke="#aac"/><path d="M10 4q2 3 0 5M12 2q3 5 0 9M14 1q3 6 0 11" fill="none" stroke="#5ae05a" stroke-width="1.400"/></svg>
<svg width="14" height="16"><path d="M1 2q6-2 9 1 1 4 3 8-4 4-8 2-4-2-4-11z" fill="#fcfce8" stroke="#8bc34a" stroke-width="2"/></svg>
<svg width="16" height="16"><path d="M0 12h2v4H0zM3 10h3v6H3zM7 7h2v9H7zM10 4h2v12h-2zM13 0h3v16h-3z" fill="#0be020" stroke="#063" stroke-width=".5"/></svg>
<svg width="16" height="12"><path d="M0 0h16v12H0z" fill="#e11"/><text x="1" y="9" font-size="8" font-weight="bold" fill="#fff">ATI</text></svg>
<svg width="16" height="16"><circle cx="8" cy="8" r="7.500" fill="#1a8a4c" stroke="#dff"/><path d="M4 4v4q1 3 4 2V5m0 5q3 1 3-2V4" fill="none" stroke="#fff" stroke-width="1.800"/></svg>
<span class="ps-1">14:33</span>
</div>
</footer>

<script src="https://cdn.jsdelivr.net/npm/bootstrap@5.3.0/dist/js/bootstrap.bundle.min.js"></script>
<script>
// Palette strip
const colors = '231f1c 373330 4c4845 5c5856 6b6a68 7d7d7b 929292 aaa9a8 c2c1bf dddcda ffffff 350f73 0089e5 00934b fff900 ed3c00 f12b72 a3476f f78200 fd9e9a 71655c bbb0d7 8f80b8 6378b9 705aa0 7c6f96 4a5679 504b60 616f88 0076cb 60c1f5 8faac0 758891 5b666c 404548 43605f 2f746b 3a7f7c 259383 1f966c 00adc8'.split(' ');
document.getElementById('pal').innerHTML = colors.map(c => `<button class="swatch" aria-label="#${c}" style="background:#${c}"></button>`).join('');
// Rulers: 50 mm take 103 px, the page corner is the origin
const step = 10.3, H0 = 286, V0 = 689;
let h = '', v = '';
for (let i = -27; i <= 100; i++) {
  const x = Math.round(H0 + i * step) + .5, len = i % 10 === 0 ? 7 : i % 5 === 0 ? 4 : 2;
  h += `<path d="M${x} 16v-${len}" stroke="#000"/>`;
  if (i % 10 === 0 && i < 70) h += `<text x="${x}" y="8" text-anchor="middle">${Math.abs(i * 5)}</text>`;
}
h += '<text x="1017" y="8" text-anchor="end">миллиметров</text><path d="M463.5 0v16" stroke="#000" stroke-dasharray="3 2"/>';
for (let i = -9; i <= 66; i++) {
  const y = Math.round(V0 - i * step) + .5, len = i % 10 === 0 ? 5 : i % 5 === 0 ? 3 : 2;
  v += `<path d="M17 ${y}h-${len}" stroke="#000"/>`;
  if (i % 10 === 0) v += `<text transform="translate(11 ${y}) rotate(-90)" text-anchor="middle">${i * 5}</text>`;
}
v += '<text transform="translate(11 781) rotate(-90)">миллиметров</text><path d="M0 287.5h17" stroke="#000" stroke-dasharray="3 2"/>';
document.getElementById('hr').innerHTML = h;
document.getElementById('vr').innerHTML = v;
</script>
</body>
</html>
